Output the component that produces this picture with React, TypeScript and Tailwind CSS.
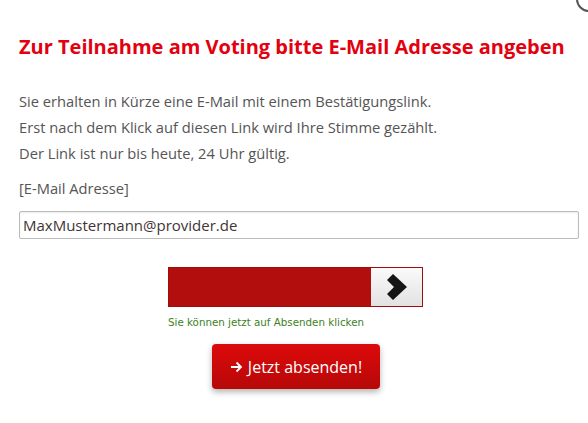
const App = () => {
    return (
        <div className="relative h-[423px] w-[588px] overflow-hidden bg-white font-['Open_Sans',sans-serif]">
            {/* close button peeking in at the corner */}
            <div className="absolute -right-[14px] -top-[14px] h-[26px] w-[26px] rounded-full border-2 border-[#555] bg-white" />

            <div className="px-[19px] pt-[34px]">
                <h2 className="text-[20px] font-bold leading-[26px] text-[#e3000f]">
                    Zur Teilnahme am Voting bitte E-Mail Adresse angeben
                </h2>

                <div className="mt-[28px] text-[14.7px] leading-[26px] text-[#555]">
                    <p>Sie erhalten in Kürze eine E-Mail mit einem Bestätigungslink.</p>
                    <p>Erst nach dem Klick auf diesen Link wird Ihre Stimme gezählt.</p>
                    <p>Der Link ist nur bis heute, 24 Uhr gültig.</p>
                </div>

                <p className="mt-[9px] text-[14.7px] leading-[26px] text-[#555]">[E-Mail Adresse]</p>

                <input
                    type="text"
                    defaultValue="MaxMustermann@provider.de"
                    className="mt-[10px] h-[28px] w-[560px] rounded-[2px] border border-[#bbb] px-[3px] text-[15px] text-[#3f3535] shadow-[inset_0_1px_2px_rgba(0,0,0,0.08)] outline-none"
                />

                {/* slide-to-unlock bar */}
                <div className="mt-[28px] flex flex-col items-center">
                    <div className="ml-[3px] flex h-[40px] w-[255px] justify-end border border-[#9e0c0c] bg-[#b20e0e]">
                        <div className="flex h-full w-[51px] items-center justify-center bg-gradient-to-b from-[#fafafa] to-[#e2e2e2]">
                            <svg width="24" height="26" viewBox="0 0 24 26">
                                <path d="M2 6 L8 0 L22 13 L8 26 L2 20 L9 13 Z" fill="#151515" />
                            </svg>
                        </div>
                    </div>
                    <p className="ml-[3px] mt-[8px] w-[255px] font-['DejaVu_Sans',sans-serif] text-[10.3px] text-[#3d7f1e]">
                        Sie können jetzt auf Absenden klicken
                    </p>
                </div>

                <div className="mt-[14px] flex justify-center">
                    <button className="ml-[4px] flex h-[45px] w-[168px] items-center justify-center gap-[5px] rounded-[4px] bg-gradient-to-b from-[#dd0a0a] to-[#b60808] text-[16px] text-white shadow-[0_3px_6px_rgba(0,0,0,0.3)]">
                        <svg width="13" height="12" viewBox="0 0 13 12" className="mt-[1px]">
                            <path d="M1 6 H11 M6.5 1.5 L11 6 L6.5 10.5" stroke="white" strokeWidth="1.8" fill="none" />
                        </svg>
                        <span>Jetzt absenden!</span>
                    </button>
                </div>
            </div>
        </div>
    );
};

export default App;
